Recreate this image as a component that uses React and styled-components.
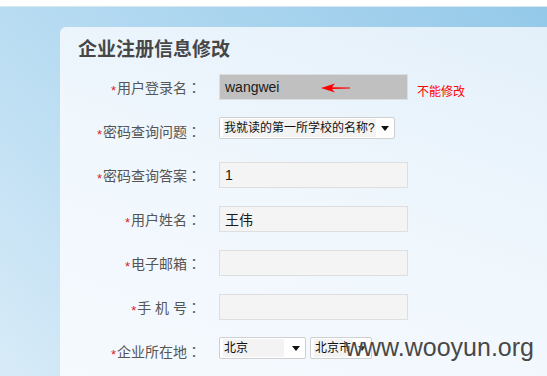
import React from 'react';
import styled, { createGlobalStyle } from 'styled-components';

const GlobalStyle = createGlobalStyle`
    html, body {
        margin: 0;
        padding: 0;
        overflow: hidden;
    }
    body {
        font-family: 'Liberation Sans', 'Noto Sans CJK SC', sans-serif;
    }
`;

const fields = [
    { label: '用户登录名', kind: 'locked', value: 'wangwei' },
    { label: '密码查询问题', kind: 'question', value: '我就读的第一所学校的名称?' },
    { label: '密码查询答案', kind: 'input', value: '1' },
    { label: '用户姓名', kind: 'input', value: '王伟' },
    { label: '电子邮箱', kind: 'input', value: '' },
    { label: '手 机 号', kind: 'input', value: '' },
    { label: '企业所在地', kind: 'region' },
];

const Arrow = () => (
    <svg width="30" height="10" viewBox="0 0 30 10">
        <path d="M0 5 L14 0.5 L11 4.2 L29 4.6 L29 5.6 L11 5.9 L14 9.5 Z" fill="#f00" />
    </svg>
);

const Caret = () => (
    <svg width="8" height="5" viewBox="0 0 8 5">
        <path d="M0 0 H8 L4 5 Z" fill="#111" />
    </svg>
);

const App = () => {
    const renderControl = (field) => {
        if (field.kind === 'locked') {
            return (
                <>
                    <Input locked>
                        <span>{field.value}</span>
                        <ArrowSlot><Arrow /></ArrowSlot>
                    </Input>
                    <Note>不能修改</Note>
                </>
            );
        }
        if (field.kind === 'question') {
            return (
                <Select width={176}>
                    <SelectText shaded>{field.value}</SelectText>
                    <Caret />
                </Select>
            );
        }
        if (field.kind === 'region') {
            return (
                <SelectGroup>
                    <Select width={87}>
                        <SelectText shaded wide>北京</SelectText>
                        <Caret />
                    </Select>
                    <Select width={62}>
                        <SelectText shaded>北京市</SelectText>
                        <Caret />
                    </Select>
                </SelectGroup>
            );
        }
        return <Input>{field.value}</Input>;
    };

    return (
        <Page>
            <GlobalStyle />
            <TopStrip />
            <Backdrop>
                <Panel>
                    <Title>企业注册信息修改</Title>
                    <Form>
                        {fields.map((field) => (
                            <Row key={field.label}>
                                <Label>
                                    <Star>*</Star>{field.label}<Colon>：</Colon>
                                </Label>
                                <Control>{renderControl(field)}</Control>
                            </Row>
                        ))}
                    </Form>
                </Panel>
            </Backdrop>
            <Watermark>www.wooyun.org</Watermark>
        </Page>
    );
};

const Page = styled.div`
    position: relative;
    width: 547px;
    height: 376px;
    overflow: hidden;
    background: #fff;
`;

const TopStrip = styled.div`
    height: 7px;
    background: #fff;
    border-bottom: 1px solid #d8e6ef;
    box-sizing: border-box;
`;

const Backdrop = styled.div`
    display: flex;
    height: 369px;
    padding: 20px 0 0 60px;
    box-sizing: border-box;
    background:
        linear-gradient(90deg, rgba(255,255,255,0) 0%, rgba(120,186,226,0.55) 100%),
        linear-gradient(180deg, #b8dcf2 0%, #d8ebf8 100%);
`;

const Panel = styled.div`
    flex: 1;
    height: 400px;
    border-radius: 6px 0 0 0;
    padding-top: 10px;
    background: linear-gradient(200deg, #e3f0fa 0%, #f0f7fd 45%, #f6fafe 100%);
`;

const Title = styled.h1`
    margin: 0 0 11px 18px;
    font-size: 19px;
    line-height: 26px;
    font-weight: bold;
    color: #474747;
`;

const Form = styled.div`
    display: flex;
    flex-direction: column;
    gap: 18px;
`;

const Row = styled.div`
    display: grid;
    grid-template-columns: 141px auto;
    column-gap: 18px;
    height: 26px;
    align-items: center;
`;

const Label = styled.div`
    text-align: right;
    font-size: 14px;
    color: #555;
    white-space: pre;
`;

const Star = styled.span`
    color: #e02020;
    font-size: 13px;
    position: relative;
    top: 2px;
    margin-right: 1px;
`;

const Colon = styled.span`
    font-family: 'Noto Sans CJK TC', sans-serif;
`;

const Control = styled.div`
    display: flex;
    align-items: center;
    height: 26px;
`;

const Input = styled.div`
    display: flex;
    align-items: center;
    width: 189px;
    height: 26px;
    box-sizing: border-box;
    padding-left: 5px;
    border: 1px solid #dedede;
    background: ${(p) => (p.locked ? '#c0c0c0' : '#f4f4f4')};
    font-size: 14px;
    color: #1a1a1a;
`;

const ArrowSlot = styled.span`
    display: flex;
    margin-left: 42px;
    margin-top: 2px;
`;

const Note = styled.span`
    margin: 7px 0 0 9px;
    font-size: 12px;
    color: #f00;
`;

const SelectGroup = styled.div`
    display: flex;
    gap: 4px;
    align-self: flex-start;
    margin-top: -1px;
`;

const Select = styled.div`
    display: flex;
    align-items: center;
    justify-content: space-between;
    align-self: flex-start;
    width: ${(p) => p.width}px;
    height: 22px;
    margin-top: -1px;
    box-sizing: border-box;
    padding: 0 5px 0 3px;
    border: 1px solid #cfcfcf;
    border-radius: 2px;
    background: #fff;
    ${SelectGroup} & {
        margin-top: 0;
    }
`;

const SelectText = styled.span`
    display: block;
    flex: ${(p) => (p.wide ? '1' : 'none')};
    margin-right: ${(p) => (p.wide ? '8px' : '0')};
    padding: 1px;
    background: ${(p) => (p.shaded ? '#f3f3f3' : 'transparent')};
    font-size: 12px;
    line-height: 16px;
    color: #111;
    white-space: nowrap;
    overflow: hidden;
`;

const Watermark = styled.div`
    position: absolute;
    left: 345px;
    top: 335px;
    font-family: 'Liberation Sans', Arial, sans-serif;
    font-size: 25px;
    line-height: 25px;
    color: #484848;
    text-shadow: 0 0 2px rgba(255,255,255,0.8);
`;

export default App;
